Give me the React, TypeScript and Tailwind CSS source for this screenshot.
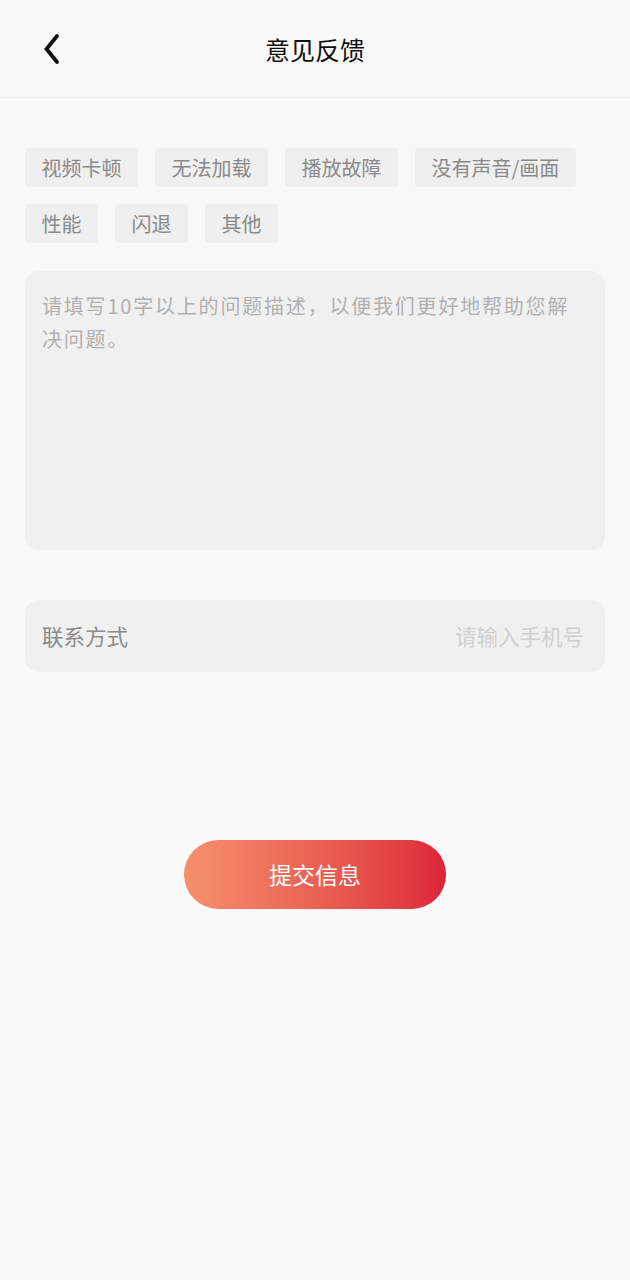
import React from "react";

const tags = ["视频卡顿", "无法加载", "播放故障", "没有声音/画面", "性能", "闪退", "其他"];

export default function App() {
  return (
    <div
      className="w-[630px] h-[1280px] bg-[#f9f9f9] flex flex-col"
      style={{ fontFamily: '"Noto Sans CJK SC", "Noto Sans", sans-serif' }}
    >
      <header className="relative h-[98px] border-b border-[#ececec] flex items-center justify-center">
        <svg
          className="absolute left-[40px] top-[32px]"
          width="24"
          height="34"
          viewBox="0 0 24 34"
          fill="none"
        >
          <polyline
            points="17,4 6.5,17 17,30"
            stroke="#111"
            strokeWidth="3.8"
            strokeLinecap="round"
            strokeLinejoin="miter"
          />
        </svg>
        <h1 className="text-[25px] leading-none text-[#111] mt-[2px]">意见反馈</h1>
      </header>

      <main className="px-[25px] pt-[50px] flex flex-col">
        <div className="flex flex-wrap gap-x-[17px] gap-y-[17px]">
          {tags.map((t) => (
            <span
              key={t}
              className="h-[39px] px-[16.5px] flex items-center rounded-[4px] bg-[#efefef] text-[20px] text-[#8a8a8a] leading-none"
            >
              {t}
            </span>
          ))}
        </div>

        <div className="mt-[28px] h-[279px] rounded-[14px] bg-[#f0f0f0] pl-[17px] pr-[10px] pt-[18px]">
          <p className="text-[20px] leading-[33px] text-[#b0b0b0] tracking-[1.8px] whitespace-nowrap">
            请填写10字以上的问题描述，以便我们更好地帮助您解
            <br />
            决问题。
          </p>
        </div>

        <div className="mt-[50px] h-[72px] rounded-[14px] bg-[#f0f0f0] pl-[17px] pr-[21px] flex items-center justify-between">
          <span className="text-[21.5px] text-[#8a8a8a]">联系方式</span>
          <span className="text-[21.5px] text-[#d0d0d0]">请输入手机号</span>
        </div>

        <div className="mt-[168px] flex justify-center">
          <button className="w-[262px] h-[69px] rounded-full bg-gradient-to-r from-[#f6906d] to-[#dc2339] text-white text-[23px] flex items-center justify-center">
            提交信息
          </button>
        </div>
      </main>
    </div>
  );
}
